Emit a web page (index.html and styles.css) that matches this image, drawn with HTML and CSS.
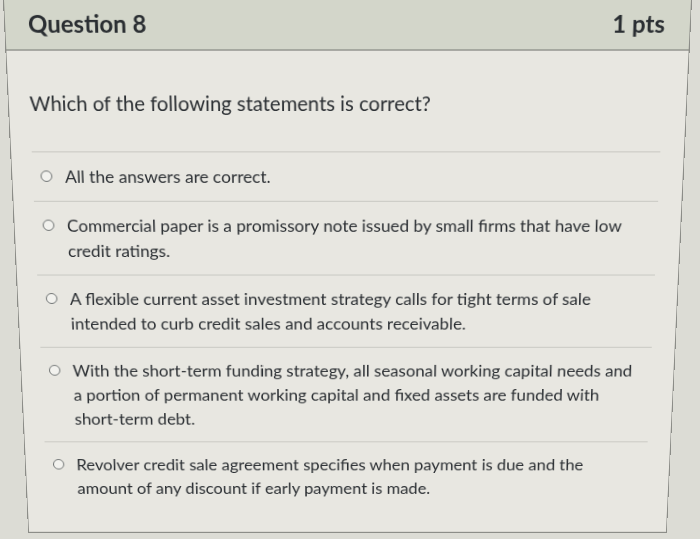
FILE: index.html
```html
<!DOCTYPE html>
<html lang="en">
<head>
<meta charset="utf-8">
<title>Question 8</title>
<link rel="stylesheet" href="styles.css">
</head>
<body>
  <div class="card">
    <div class="header">
      <span class="q-name">Question 8</span>
      <span class="q-points">1 pts</span>
    </div>
    <div class="content">
      <div class="q-text">Which of the following statements is correct?</div>
      <div class="answers">
        <label class="answer"><span class="radio"></span><span class="a-text">All the answers are correct.</span></label>
        <label class="answer"><span class="radio"></span><span class="a-text">Commercial paper is a promissory note issued by small firms that have low credit ratings.</span></label>
        <label class="answer"><span class="radio"></span><span class="a-text">A flexible current asset investment strategy calls for tight terms of sale intended to curb credit sales and accounts receivable.</span></label>
        <label class="answer"><span class="radio"></span><span class="a-text">With the short-term funding strategy, all seasonal working capital needs and a portion of permanent working capital and fixed assets are funded with short-term debt.</span></label>
        <label class="answer"><span class="radio"></span><span class="a-text">Revolver credit sale agreement specifies when payment is due and the amount of any discount if early payment is made.</span></label>
      </div>
    </div>
  </div>
</body>
</html>
```

FILE: styles.css
```css
html, body {
  margin: 0;
  padding: 0;
  height: 100%;
  overflow: hidden;
  background: #dcdcd5;
}
body {
  font-family: Lato, "Open Sans", "Liberation Sans", sans-serif;
  color: #2b2f33;
}
.card {
  box-sizing: border-box;
  width: 689px;
  margin-left: 3px;
  border: 1px solid #8c8d88;
  border-top: 0;
  background: #e8e7e1;
  padding-bottom: 25px;
  transform-origin: 50% 0;
  transform: perspective(510px) rotateX(-4deg);
}
.header {
  box-sizing: border-box;
  height: 51px;
  padding: 0 25px 4px 23px;
  background: #d3d6ca;
  border-bottom: 1px solid #6f716c;
  display: flex;
  align-items: center;
  justify-content: space-between;
  font-size: 24px;
  font-weight: 700;
  color: #2a2e32;
}
.content {
  padding: 0 24px 0 21px;
}
.q-text {
  margin-top: 41px;
  font-size: 20.5px;
  line-height: 26px;
}
.answers {
  margin-top: 37px;
}
.answer {
  display: flex;
  align-items: flex-start;
  gap: 13px;
  padding: 11.5px 17px 12.5px 7px;
  border-top: 1px solid #c6c6c0;
  font-size: 17.7px;
  line-height: 27px;
}
.radio {
  flex: none;
  box-sizing: border-box;
  width: 12px;
  height: 12px;
  margin-top: 7.5px;
  margin-left: 1px;
  border: 1.5px solid #6d7171;
  border-radius: 50%;
  background: #f2f2ee;
}
```
